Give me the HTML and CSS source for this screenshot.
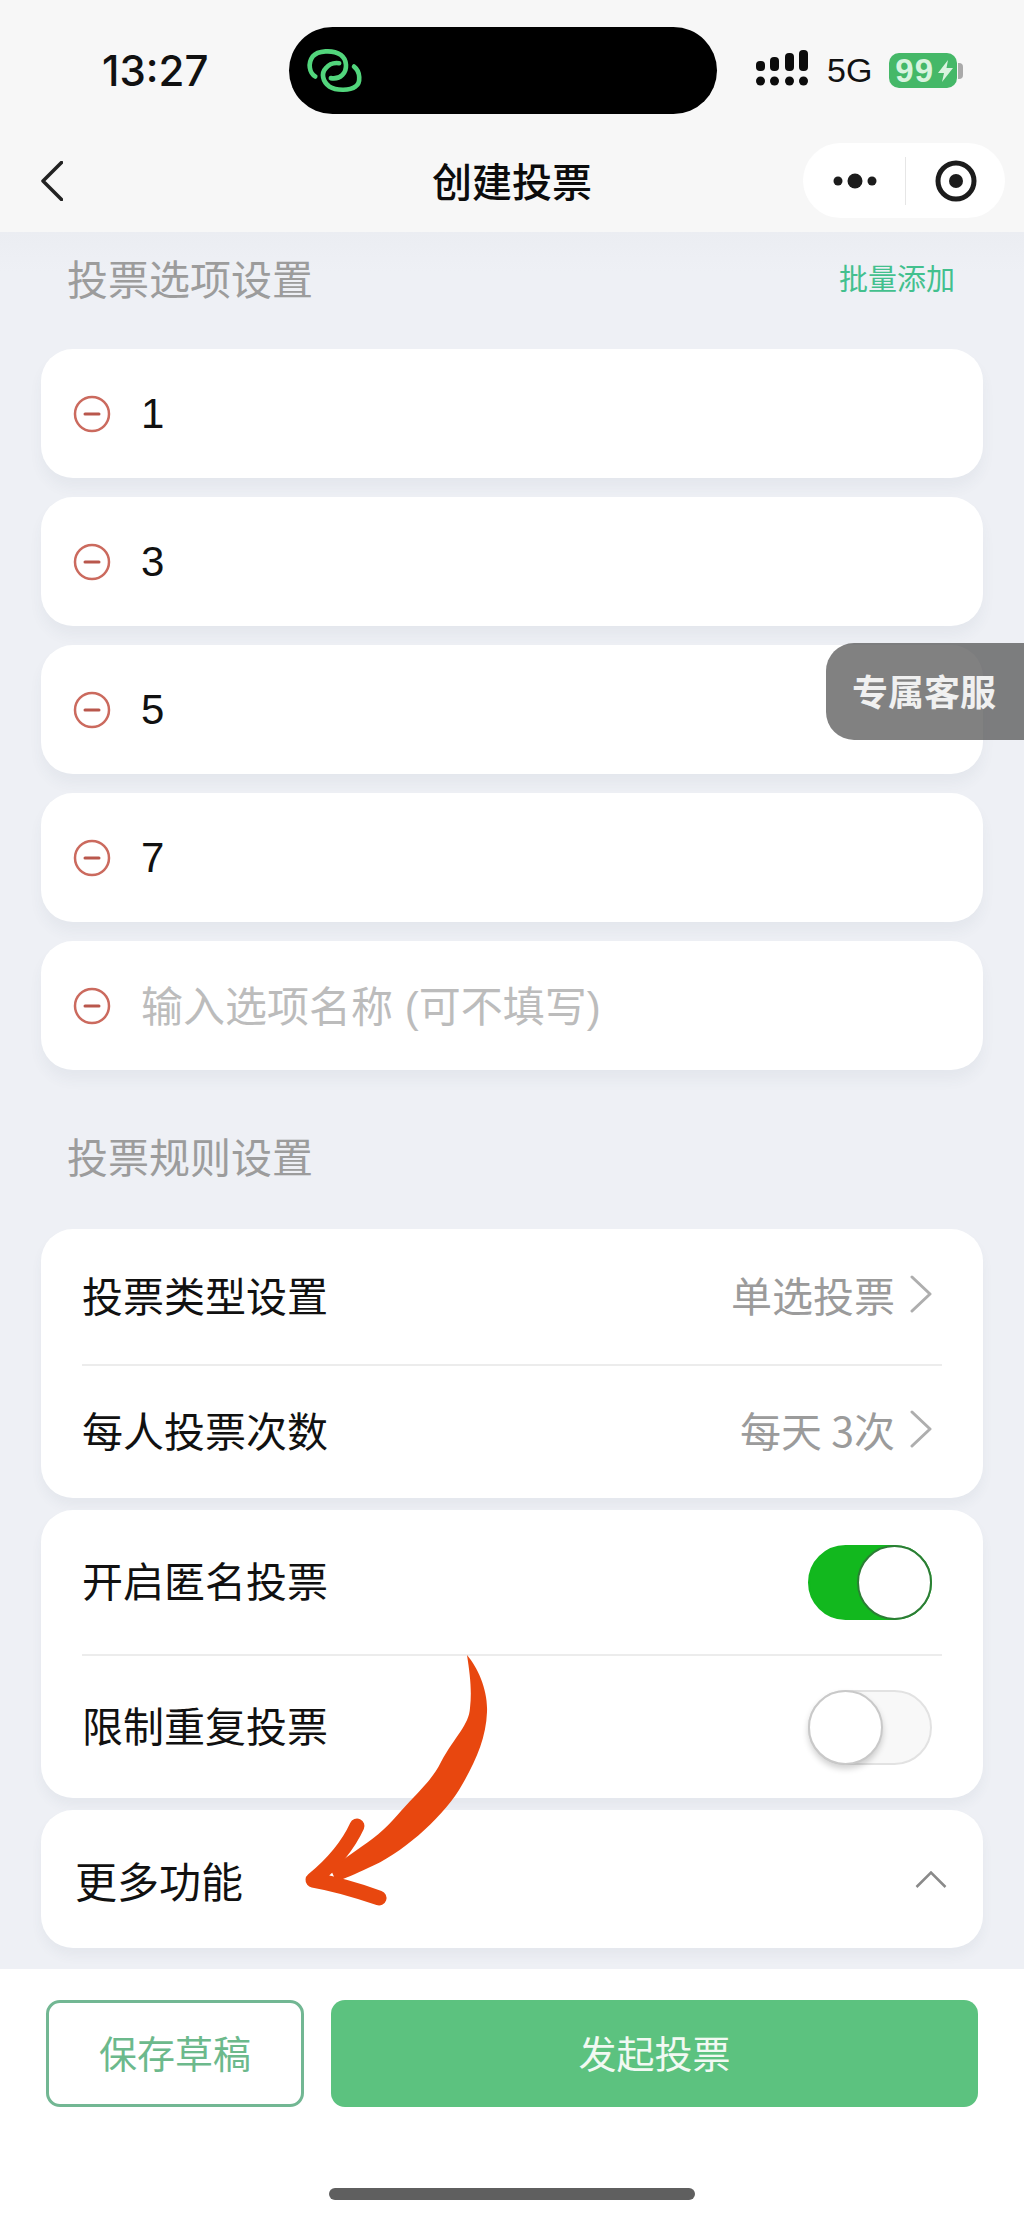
FILE: index.html
```html
<!DOCTYPE html>
<html lang="zh-CN">
  <head>
    <meta charset="UTF-8" />
    <meta name="viewport" content="width=device-width, initial-scale=1.0" />
    <title>创建投票</title>
    <link rel="stylesheet" href="styles.css">
  </head>
  <body>
    <div class="phone">
      <header class="top">
        <div class="status">
          <span class="time">13:27</span>
          <div class="island">
            <svg class="island-icon" viewBox="80 82 172 140" width="57" height="47">
              <path d="M108 170C90 160 85 130 100 110C115 92 160 88 185 105C205 120 205 150 190 165C180 175 165 177 155 175" />
              <path d="M225 140C245 155 245 190 230 200C210 215 170 212 150 200C130 185 125 160 140 145C150 132 165 128 180 130" />
            </svg>
          </div>
          <svg class="signal" viewBox="0 0 52 42" width="52" height="42">
            <rect x="0" y="11" width="9" height="10" rx="4" />
            <rect x="14" y="7" width="9" height="14" rx="4" />
            <rect x="29" y="3" width="9" height="18" rx="4" />
            <rect x="43" y="0" width="9" height="21" rx="4" />
            <circle cx="4.500" cy="31" r="4.500" />
            <circle cx="18.500" cy="31" r="4.500" />
            <circle cx="33.500" cy="31" r="4.500" />
            <circle cx="47.500" cy="31" r="4.500" />
          </svg>
          <span class="network">5G</span>
          <div class="battery">
            <span class="battery-level">99</span>
            <svg viewBox="0 0 15 22" width="15" height="22">
              <path d="M10 0L0 13H6L4 22L15 8H8.500Z" fill="#d9f3df" />
            </svg>
          </div>
          <span class="battery-tip"></span>
        </div>
        <nav class="nav">
          <svg class="back" viewBox="0 0 22 40" width="22" height="40">
            <path d="M20.500 1.500L2 20L20.500 38.500" />
          </svg>
          <h1 class="nav-title">创建投票</h1>
          <div class="capsule">
            <svg viewBox="0 0 44 16" width="44" height="16">
              <circle cx="5" cy="8" r="4.500" />
              <circle cx="22" cy="8" r="7.500" />
              <circle cx="39" cy="8" r="4.500" />
            </svg>
            <span class="capsule-line"></span>
            <svg viewBox="0 0 42 42" width="42" height="42">
              <circle class="ring" cx="21" cy="21" r="18" />
              <circle cx="21" cy="21" r="7" />
            </svg>
          </div>
        </nav>
      </header>

      <main class="content">
        <div class="section-head">
          <h2>投票选项设置</h2>
          <a class="batch" href="#">批量添加</a>
        </div>

        <div class="option">
          <svg class="minus" viewBox="0 0 38 38" width="38" height="38"><circle cx="19" cy="19" r="17" /><path d="M12 19H26" /></svg>
          <span>1</span>
        </div>
        <div class="option">
          <svg class="minus" viewBox="0 0 38 38" width="38" height="38"><circle cx="19" cy="19" r="17" /><path d="M12 19H26" /></svg>
          <span>3</span>
        </div>
        <div class="option">
          <svg class="minus" viewBox="0 0 38 38" width="38" height="38"><circle cx="19" cy="19" r="17" /><path d="M12 19H26" /></svg>
          <span>5</span>
        </div>
        <div class="option">
          <svg class="minus" viewBox="0 0 38 38" width="38" height="38"><circle cx="19" cy="19" r="17" /><path d="M12 19H26" /></svg>
          <span>7</span>
        </div>
        <div class="option">
          <svg class="minus" viewBox="0 0 38 38" width="38" height="38"><circle cx="19" cy="19" r="17" /><path d="M12 19H26" /></svg>
          <span class="placeholder">输入选项名称 (可不填写)</span>
        </div>

        <div class="section-head rules-head">
          <h2>投票规则设置</h2>
        </div>

        <section class="group">
          <div class="row type-row">
            <span class="label">投票类型设置</span>
            <span class="value">单选投票
              <svg viewBox="0 0 22 38" width="22" height="38"><path d="M2 2L20 19L2 36" /></svg>
            </span>
          </div>
          <div class="row count-row">
            <span class="label">每人投票次数</span>
            <span class="value">每天 3次
              <svg viewBox="0 0 22 38" width="22" height="38"><path d="M2 2L20 19L2 36" /></svg>
            </span>
          </div>
        </section>

        <section class="group">
          <div class="row switch-row">
            <span class="label">开启匿名投票</span>
            <span class="toggle on"><i></i></span>
          </div>
          <div class="row switch-row">
            <span class="label">限制重复投票</span>
            <span class="toggle"><i></i></span>
          </div>
        </section>

        <section class="group more">
          <span>更多功能</span>
          <svg viewBox="0 0 32 17" width="32" height="17"><path d="M1.500 16L16 1.500L30.500 16" /></svg>
        </section>
      </main>

      <footer class="bottom">
        <div class="actions">
          <button class="btn-draft">保存草稿</button>
          <button class="btn-submit">发起投票</button>
        </div>
        <div class="home-bar"></div>
      </footer>

      <div class="service">专属客服</div>

      <svg class="arrow" viewBox="0 0 1024 2219" width="1024" height="2219">
        <path class="arrow-body" d="M467 1655C478 1668 488 1690 487 1712C486 1740 474 1765 459 1790C440 1820 400 1855 368 1868C355 1874 345 1879 336 1881L330 1868C340 1862 350 1855 361 1847C378 1836 390 1824 401 1811C420 1790 432 1780 441 1762C455 1736 469 1725 470 1708C472 1690 470 1675 467 1655Z" />
        <path class="arrow-head" d="M357 1826C346 1850 330 1866 313 1880C336 1884 362 1892 379 1898" />
      </svg>
    </div>
  </body>
</html>
```

FILE: styles.css
```css
* {
  box-sizing: border-box;
}
body {
  margin: 0;
  font-family: "Noto Sans CJK SC", "Liberation Sans", sans-serif;
  color: #111;
}
.phone {
  position: relative;
  width: 1024px;
  height: 2219px;
  overflow: hidden;
  display: flex;
  flex-direction: column;
  background-color: #eef0f5;
}

/* top bar */
.top {
  height: 232px;
  padding-top: 27px;
  background-color: #f7f7f7;
}
.status {
  display: flex;
  align-items: center;
  height: 87px;
  padding-left: 102px;
}
.time {
  width: 187px;
  font-family: "Inter", "Liberation Sans", sans-serif;
  font-size: 42px;
  font-weight: 500;
  color: #111;
}
.island {
  width: 428px;
  height: 87px;
  border-radius: 44px;
  background-color: #000;
  display: flex;
  align-items: center;
  padding-left: 17px;
}
.island-icon {
  fill: none;
  stroke: #52d57c;
  stroke-width: 14;
  stroke-linecap: round;
}
.signal {
  margin-left: 39px;
  fill: #0c0c0c;
}
.network {
  margin-left: 19px;
  font-family: "Liberation Sans", sans-serif;
  font-size: 34px;
  color: #111;
}
.battery {
  margin-left: 17px;
  width: 68px;
  height: 35px;
  border-radius: 10px;
  background-color: #45b868;
  display: flex;
  align-items: center;
  gap: 4px;
  padding-left: 6px;
}
.battery-level {
  font-family: "Liberation Sans", sans-serif;
  font-size: 33px;
  font-weight: bold;
  line-height: 35px;
  letter-spacing: 1px;
  color: #d9f3df;
}
.battery-tip {
  width: 5px;
  height: 16px;
  margin-left: 1px;
  border-radius: 0 4px 4px 0;
  background-color: #aaa;
}
.nav {
  display: grid;
  grid-template-columns: 1fr auto 1fr;
  align-items: center;
  height: 75px;
  margin-top: 29px;
  padding: 0 19px;
}
.back {
  margin-left: 22px;
  fill: none;
  stroke: #222;
  stroke-width: 3.500;
  stroke-linecap: round;
  stroke-linejoin: round;
}
.nav-title {
  margin: 0;
  font-size: 40px;
  font-weight: 500;
  line-height: 75px;
  color: #0c0c0c;
}
.capsule {
  justify-self: end;
  width: 202px;
  height: 75px;
  border-radius: 38px;
  background-color: #fff;
  display: flex;
  align-items: center;
  padding-left: 30px;
  fill: #1c1c1c;
}
.capsule-line {
  width: 1px;
  height: 48px;
  margin: 0 29px 0 28px;
  background-color: #e6e6e6;
}
.ring {
  fill: none;
  stroke: #1c1c1c;
  stroke-width: 5;
}

/* form */
.content {
  flex: 1;
  padding: 0 41px;
  background: linear-gradient(#ebedf2, #eef0f5 40px);
}
.section-head {
  display: flex;
  justify-content: space-between;
  align-items: center;
  padding: 23px 28px 50px 26px;
}
.section-head h2 {
  margin: 0;
  font-size: 41px;
  font-weight: 400;
  line-height: 44px;
  color: #9c9c9c;
}
.batch {
  font-size: 29px;
  color: #43c08e;
  text-decoration: none;
}
.rules-head {
  padding-top: 44px;
  padding-bottom: 52px;
}
.option {
  display: flex;
  align-items: center;
  gap: 30px;
  height: 129px;
  margin-bottom: 19px;
  padding-left: 32px;
  border-radius: 32px;
  background-color: #fff;
  box-shadow: 0 10px 14px rgba(60, 70, 90, 0.05);
  font-family: "Liberation Sans", "Noto Sans CJK SC", sans-serif;
  font-size: 42px;
}
.minus {
  fill: none;
  stroke: #cb6a5e;
  stroke-width: 2.500;
}
.minus path {
  stroke: #b9574c;
  stroke-width: 3;
  stroke-linecap: round;
}
.placeholder {
  margin-bottom: 4px;
  color: #bcbcbc;
}
.group {
  margin-bottom: 12px;
  border-radius: 32px;
  background-color: #fff;
  box-shadow: 0 8px 12px rgba(60, 70, 90, 0.05);
  font-size: 41px;
}
.row {
  display: flex;
  justify-content: space-between;
  align-items: center;
  margin: 0 41px;
  padding-right: 10px;
  line-height: 58px;
  color: #111;
}
.row + .row {
  border-top: 2px solid #ececec;
}
.label {
  margin-bottom: 6px;
}
.type-row {
  height: 135px;
}
.count-row {
  height: 134px;
}
.switch-row {
  height: 144px;
}
.value {
  display: flex;
  align-items: center;
  gap: 15px;
  margin-bottom: 6px;
  color: #9b9b9b;
}
.value svg {
  fill: none;
  stroke: #aeaeae;
  stroke-width: 3;
  stroke-linecap: round;
  stroke-linejoin: round;
}
.toggle {
  position: relative;
  width: 124px;
  height: 75px;
  border: 2px solid #e2e2e2;
  border-radius: 38px;
  background-color: #f8f8f8;
}
.toggle i {
  position: absolute;
  left: -2px;
  top: -2px;
  width: 75px;
  height: 75px;
  border: 2px solid #c9c9c9;
  border-radius: 50%;
  background-color: #fff;
  box-shadow: 0 4px 6px rgba(0, 0, 0, 0.18);
}
.toggle.on {
  border-color: #12b81e;
  background-color: #12b81e;
}
.toggle.on i {
  left: auto;
  right: -2px;
  border-color: #2c7d35;
  box-shadow: none;
}
.more {
  display: flex;
  justify-content: space-between;
  align-items: center;
  height: 138px;
  margin-bottom: 0;
  padding: 0 36px 0 34px;
  font-size: 42px;
}
.more svg {
  fill: none;
  stroke: #8a8a8a;
  stroke-width: 2.500;
}

/* bottom bar */
.bottom {
  height: 250px;
  padding-top: 31px;
  background-color: #fff;
}
.actions {
  display: flex;
  gap: 27px;
  height: 107px;
  padding: 0 46px;
}
.actions button {
  font-family: inherit;
  font-size: 38px;
  border-radius: 14px;
  padding: 0 0 4px;
}
.btn-draft {
  width: 258px;
  border: 3px solid #72b793;
  background-color: #fff;
  color: #6cb98c;
}
.btn-submit {
  flex: 1;
  border: none;
  background-color: #5cc27f;
  color: #f1f9f2;
}
.home-bar {
  width: 366px;
  height: 12px;
  margin: 81px auto 0;
  border-radius: 6px;
  background-color: #5f5f5f;
}

/* things lying over the page */
.service {
  position: absolute;
  right: 0;
  top: 643px;
  width: 198px;
  height: 97px;
  padding-left: 26px;
  border-radius: 28px 0 0 28px;
  background-color: rgba(80, 80, 80, 0.72);
  color: #f0f0f0;
  font-size: 36px;
  font-weight: 600;
  line-height: 94px;
}
.arrow {
  position: absolute;
  left: 0;
  top: 0;
  pointer-events: none;
}
.arrow-body {
  fill: #e8470f;
}
.arrow-head {
  fill: none;
  stroke: #e8470f;
  stroke-width: 15;
  stroke-linecap: round;
  stroke-linejoin: round;
}
```
